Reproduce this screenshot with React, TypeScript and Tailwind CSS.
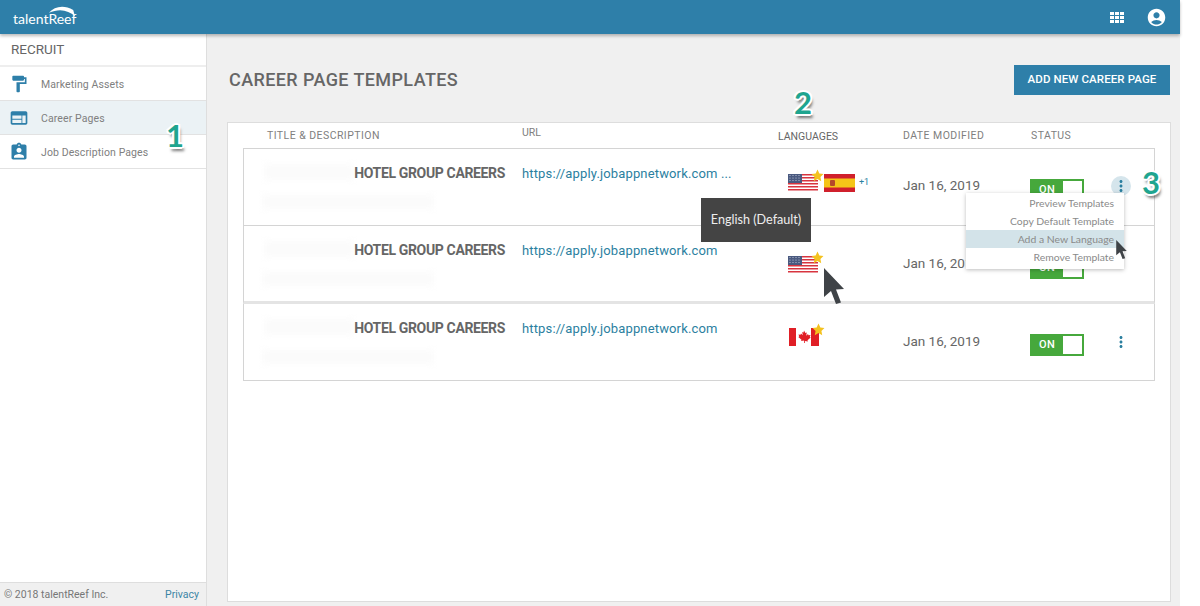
import React from 'react';
import { MdFormatPaint, MdWeb, MdAssignmentInd, MdAccountCircle, MdMoreVert } from 'react-icons/md';

const roboto = "font-['Roboto',sans-serif]";
const lato = "font-['Lato',sans-serif]";

const Star = () => (
  <svg viewBox="0 0 24 24" className="absolute right-[-6px] top-[-5px] w-[13px] h-[13px]">
    <path d="M12 1l3.4 7.2 7.6 1-5.6 5.4 1.5 7.9L12 18.6l-6.9 3.9 1.5-7.9L1 9.2l7.6-1z" fill="#f4c21f" />
  </svg>
);

const UsFlag = () => (
  <svg viewBox="0 0 30 18" className="w-[30px] h-[18px] block">
    <rect width="30" height="18" fill="#fff" />
    {[0, 3, 6, 9, 12, 15].map(y => (
      <rect key={y} y={y} width="30" height="1.5" fill="#d8343f" />
    ))}
    <rect width="14" height="9" fill="#4a5a80" />
    {[1.5, 4, 6.5].map(y =>
      [2, 5, 8, 11].map(x => <circle key={`${x}-${y}`} cx={x} cy={y} r="0.6" fill="#c8cede" />)
    )}
  </svg>
);

const SpainFlag = () => (
  <svg viewBox="0 0 31 18" className="w-[31px] h-[18px] block">
    <rect width="31" height="18" fill="#d0202c" />
    <rect y="4.5" width="31" height="9" fill="#f5c518" />
    <rect x="6" y="6" width="5" height="6" rx="1" fill="#b5482a" />
  </svg>
);

const CanadaFlag = () => (
  <svg viewBox="0 0 30 18" className="w-[30px] h-[18px] block">
    <rect width="30" height="18" fill="#fff" />
    <rect width="7" height="18" fill="#e01f26" />
    <rect x="22" width="8" height="18" fill="#e01f26" />
    <path d="M15 2.5l1.4 2.6 1.4-.7-.6 3.4 1.8-1.8.5 1.2 2-.3-.7 2.2.9.5-3.2 2.6.4 1.2-3-.4V15h-.8v-2.5l-3 .4.4-1.2-3.2-2.6.9-.5-.7-2.2 2 .3.5-1.2 1.8 1.8-.6-3.4 1.4.7z" fill="#e01f26" />
  </svg>
);

const GridIcon = () => (
  <svg viewBox="0 0 14 11" className="w-[14px] h-[11px]" fill="#fff">
    {[0, 4, 8].map(y =>
      [0, 5, 10].map(x => <rect key={`${x}-${y}`} x={x} y={y} width="4" height="3" />)
    )}
  </svg>
);

const Toggle = () => (
  <div className="w-[54px] h-[22px] bg-[#46a83c] flex items-center justify-between pl-[9px] pr-[2px] py-[2px]">
    <span className={`${roboto} text-[11px] font-medium tracking-[0.5px] text-white`}>ON</span>
    <span className="w-[19px] h-[18px] bg-white" />
  </div>
);

const Callout = ({ n, className }: { n: string; className: string }) => (
  <span className={`absolute ${lato} text-[31px] leading-none font-bold text-[#1fa58f] [text-shadow:-2px_-1px_0_#fff,2px_-1px_0_#fff,-2px_1px_0_#fff,2px_1px_0_#fff,0_-2px_0_#fff,0_2px_0_#fff,2px_4px_3px_#0008] ${className}`}>
    {n}
  </span>
);

const Cursor = ({ className }: { className: string }) => (
  <svg viewBox="0 0 20 36" className={`absolute ${className}`}>
    <path d="M0 0l20 21-8 .5 5 13-5 1.5-5-13-7 6z" fill="#3f4347" />
  </svg>
);

const navItems = [
  { label: 'Marketing Assets', Icon: MdFormatPaint, active: false },
  { label: 'Career Pages', Icon: MdWeb, active: true },
  { label: 'Job Description Pages', Icon: MdAssignmentInd, active: false },
];

const rows = [
  { url: 'https://apply.jobappnetwork.com ...', box: 'h-[77px] pt-[1px] border-t border-x', flagTop: 'pt-[24px]', flagLeft: '', dateTop: 'pt-[27px]', toggleTop: 'pt-[29px]', dotsTop: 'mt-[26px]', flags: 'both' },
  { url: 'https://apply.jobappnetwork.com', box: 'h-[79px] pt-[1px] border-t border-x border-b-[3px] border-b-[#e4e4e4]', flagTop: 'pt-[29px]', flagLeft: '', dateTop: 'pt-[28px]', toggleTop: 'pt-[30px]', dotsTop: 'mt-[26px]', flags: 'us' },
  { url: 'https://apply.jobappnetwork.com', box: 'h-[77px] pt-[1px] border-x border-b', flagTop: 'pt-[23px]', flagLeft: 'pl-[1px]', dateTop: 'pt-[28px]', toggleTop: 'pt-[29px]', dotsTop: 'mt-[27px]', flags: 'ca' },
];

export default function App() {
  return (
    <div className="w-[1200px] h-[606px] bg-white overflow-hidden relative">
      <div className="w-[1180px] h-[606px] flex flex-col">
        <header className="h-[34px] bg-[#2e7fa9] flex items-center justify-between shrink-0 z-10 shadow-[0_2px_3px_#0004] pl-[13px] pr-[13px]">
          <div className="relative h-[34px] w-[70px]">
            <svg viewBox="0 0 30 14" className="absolute left-[35px] top-[4px] w-[28px] h-[14px]">
              <path d="M1 9C7 2 17 0 27 6l2 7C22 6 12 4 1 9z" fill="#fff" />
            </svg>
            <span className={`absolute left-0 top-[11px] ${lato} text-[14px] leading-[16px] text-white`}>talentReef</span>
          </div>
          <div className="flex items-center gap-[22px] text-white">
            <GridIcon />
            <MdAccountCircle size={21} />
          </div>
        </header>

        <div className="flex flex-1 min-h-0">
          <aside className={`w-[207px] shrink-0 bg-white border-r border-[#dedede] flex flex-col ${roboto}`}>
            <div className="h-[33px] flex items-center pl-[11px] text-[13.5px] text-[#666] border-b-2 border-[#eeeeee]">RECRUIT</div>
            {navItems.map(({ label, Icon, active }) => (
              <div
                key={label}
                className={`h-[34px] flex items-center border-b border-[#e2e2e2] pl-[9px] ${active ? 'bg-[#ebf2f5]' : ''}`}
              >
                <Icon size={20} className="text-[#2e7fa9] w-[20px] shrink-0" />
                <span className="ml-[12px] pt-[2px] text-[10.5px] tracking-[0.1px] text-[#808080]">{label}</span>
              </div>
            ))}
            <div className="flex-1" />
            <div className="h-[24px] bg-[#f0f0f0] border-t border-[#dedede] flex items-center justify-between pl-[4px] pr-[7px] text-[10.5px]">
              <span className="text-[#777]">© 2018 talentReef Inc.</span>
              <span className="text-[#3d86a6]">Privacy</span>
            </div>
          </aside>

          <main className={`flex-1 bg-[#f0f0f0] flex flex-col ${roboto}`}>
            <div className="h-[88px] shrink-0 flex items-center justify-between pl-[22px] pr-[10px] pt-[3px]">
              <h1 className="text-[18px] font-medium text-[#666] tracking-[0.4px]">CAREER PAGE TEMPLATES</h1>
              <button className="w-[156px] h-[30px] bg-[#2e7fa9] text-white text-[11.5px] font-medium tracking-[0.1px]">ADD NEW CAREER PAGE</button>
            </div>

            <section className="ml-[20px] mr-[9px] h-[480px] bg-white border border-[#dddddd] flex flex-col pl-[15px] pr-[15px]">
              <div className="h-[25px] shrink-0 flex text-[10.5px] text-[#808080]">
                <span className="w-[279px] pl-[24px] pt-[5px] tracking-[0.45px]">TITLE &amp; DESCRIPTION</span>
                <span className="w-[256px] pt-[2px]">URL</span>
                <span className="w-[125px] pt-[6px] text-[#666]">LANGUAGES</span>
                <span className="w-[128px] pt-[5px] tracking-[0.45px]">DATE MODIFIED</span>
                <span className="pt-[5px] tracking-[0.45px]">STATUS</span>
              </div>

              {rows.map((row, i) => (
                <div key={i} className={`${row.box} border-[#d4d4d4] flex relative shrink-0`}>
                  <div className="w-[278px] relative">
                    <div className="absolute left-[20px] top-[14px] w-[90px] h-[16px] bg-[#fbfbfb] blur-[3px]" />
                    <div className="absolute left-[18px] top-[45px] w-[172px] h-[14px] bg-[#fbfbfb] blur-[3px]" />
                    <div className="text-right pt-[15px] pr-[17px] text-[14px] leading-[17px] font-bold tracking-[-0.35px] text-[#666] relative">HOTEL GROUP CAREERS</div>
                  </div>
                  <div className="w-[266px] pt-[15px] text-[13px] leading-[17px] tracking-[0.15px] text-[#2b7f9f] whitespace-nowrap">{row.url}</div>
                  <div className={`w-[115px] ${row.flagTop} ${row.flagLeft} flex items-start`}>
                    <div className="relative">
                      {row.flags === 'ca' ? <CanadaFlag /> : <UsFlag />}
                      <Star />
                    </div>
                    {row.flags === 'both' && (
                      <>
                        <div className="ml-[6px]"><SpainFlag /></div>
                        <span className="ml-[4px] mt-[2px] text-[9px] text-[#2b7f9f]">+1</span>
                      </>
                    )}
                  </div>
                  <div className={`w-[127px] ${row.dateTop} text-[13.5px] leading-[17px] text-[#666]`}>Jan 16, 2019</div>
                  <div className={`w-[78px] ${row.toggleTop}`}><Toggle /></div>
                  <div className={`w-[20px] h-[20px] ${row.dotsTop} ml-[3px] flex items-center justify-center rounded-full text-[#2b7f9f] ${i === 0 ? 'bg-[#d5e5ec]' : ''}`}>
                    <MdMoreVert size={18} />
                  </div>
                </div>
              ))}
            </section>
          </main>
        </div>
      </div>

      {/* overlays from the annotated screenshot */}
      <div className={`absolute left-[701px] top-[198px] w-[110px] h-[44px] bg-[#444444] flex items-center justify-center text-[12.6px] text-[#eeeeee] ${lato}`}>
        English (Default)
      </div>
      <Cursor className="left-[824px] top-[268px] w-[20px] h-[36px]" />

      <div className={`absolute left-[966px] top-[193px] w-[158px] h-[76px] bg-white shadow-[0_1px_4px_#0004] text-[10.4px] text-[#8a8a8a] text-right ${lato}`}>
        <div className="h-[18px] leading-[18px] mt-[1px] pr-[10px]">Preview Templates</div>
        <div className="h-[18px] leading-[18px] pr-[10px]">Copy Default Template</div>
        <div className="h-[18px] leading-[18px] pr-[10px] bg-[#d3e3e9]">Add a New Language</div>
        <div className="h-[18px] leading-[18px] pr-[10px]">Remove Template</div>
      </div>
      <Cursor className="left-[1116px] top-[240px] w-[11px] h-[19px]" />

      <Callout n="1" className="left-[166px] top-[120px]" />
      <Callout n="2" className="left-[794px] top-[87px]" />
      <Callout n="3" className="left-[1142px] top-[167px]" />
    </div>
  );
}
